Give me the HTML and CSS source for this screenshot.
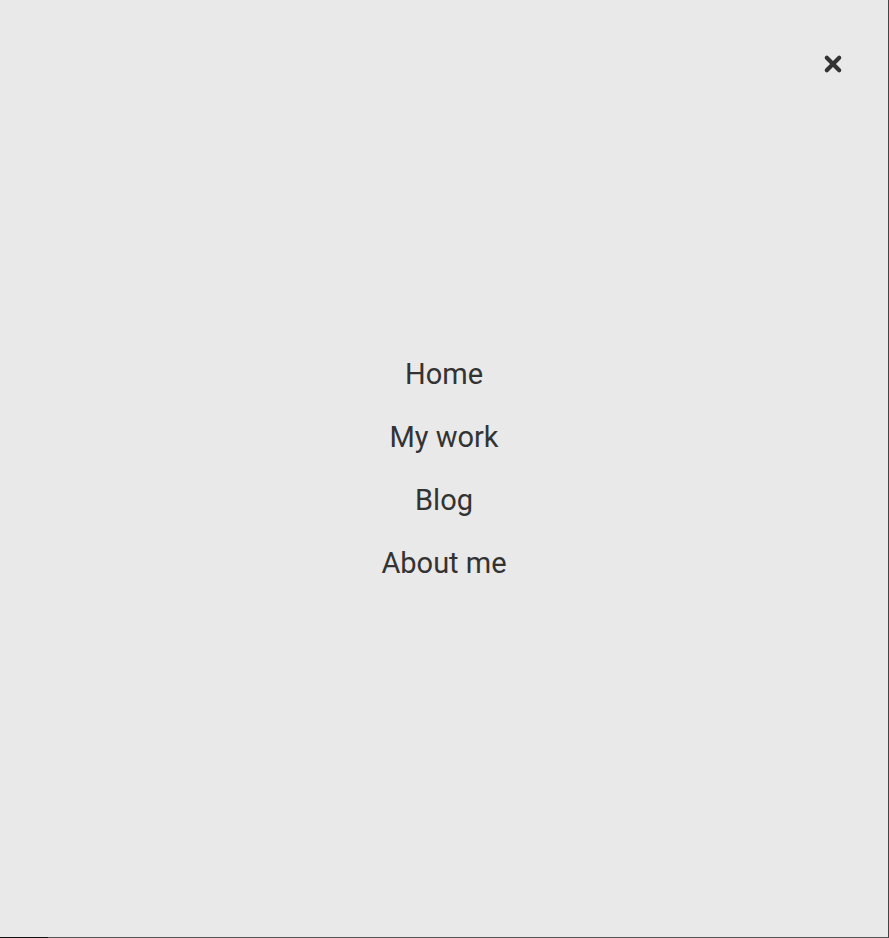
FILE: index.html
```html
<!DOCTYPE html>
<html lang="en">
<head>
<meta charset="utf-8">
<title>Menu</title>
<link rel="stylesheet" href="styles.css">
</head>
<body>
<div class="overlay">
  <button class="close" aria-label="Close menu">
    <svg width="20" height="20" viewBox="0 0 20 20" aria-hidden="true">
      <path d="M3.8 3.8 L16.2 16.2 M16.2 3.8 L3.8 16.2" stroke="#333" stroke-width="4.2" stroke-linecap="round" fill="none"/>
    </svg>
  </button>
  <nav class="menu">
    <a class="menu-link" href="#">Home</a>
    <a class="menu-link" href="#">My work</a>
    <a class="menu-link" href="#">Blog</a>
    <a class="menu-link" href="#">About me</a>
  </nav>
  <div class="edge-mark"></div>
</div>
</body>
</html>
```
FILE: styles.css
```css
html, body {
  margin: 0;
  padding: 0;
  height: 100%;
  background: #e9e9e9;
}
.overlay {
  position: relative;
  width: 888px;
  height: 937px;
  background: #e9e9e9;
  border-right: 1px solid #444;
  border-bottom: 1px solid #555;
  display: flex;
  align-items: center;
  justify-content: center;
  font-family: Roboto, "Liberation Sans", sans-serif;
}
.close {
  position: absolute;
  top: 54px;
  left: 823px;
  width: 20px;
  height: 20px;
  padding: 0;
  border: 0;
  background: none;
  cursor: pointer;
  display: block;
}
.close svg {
  display: block;
}
.menu {
  display: flex;
  flex-direction: column;
  align-items: center;
}
.menu-link {
  display: block;
  font-size: 29px;
  line-height: 63px;
  color: #333;
  text-decoration: none;
}
.edge-mark {
  position: absolute;
  left: 0;
  bottom: -1px;
  width: 48px;
  height: 1px;
  background: #111;
}
```
